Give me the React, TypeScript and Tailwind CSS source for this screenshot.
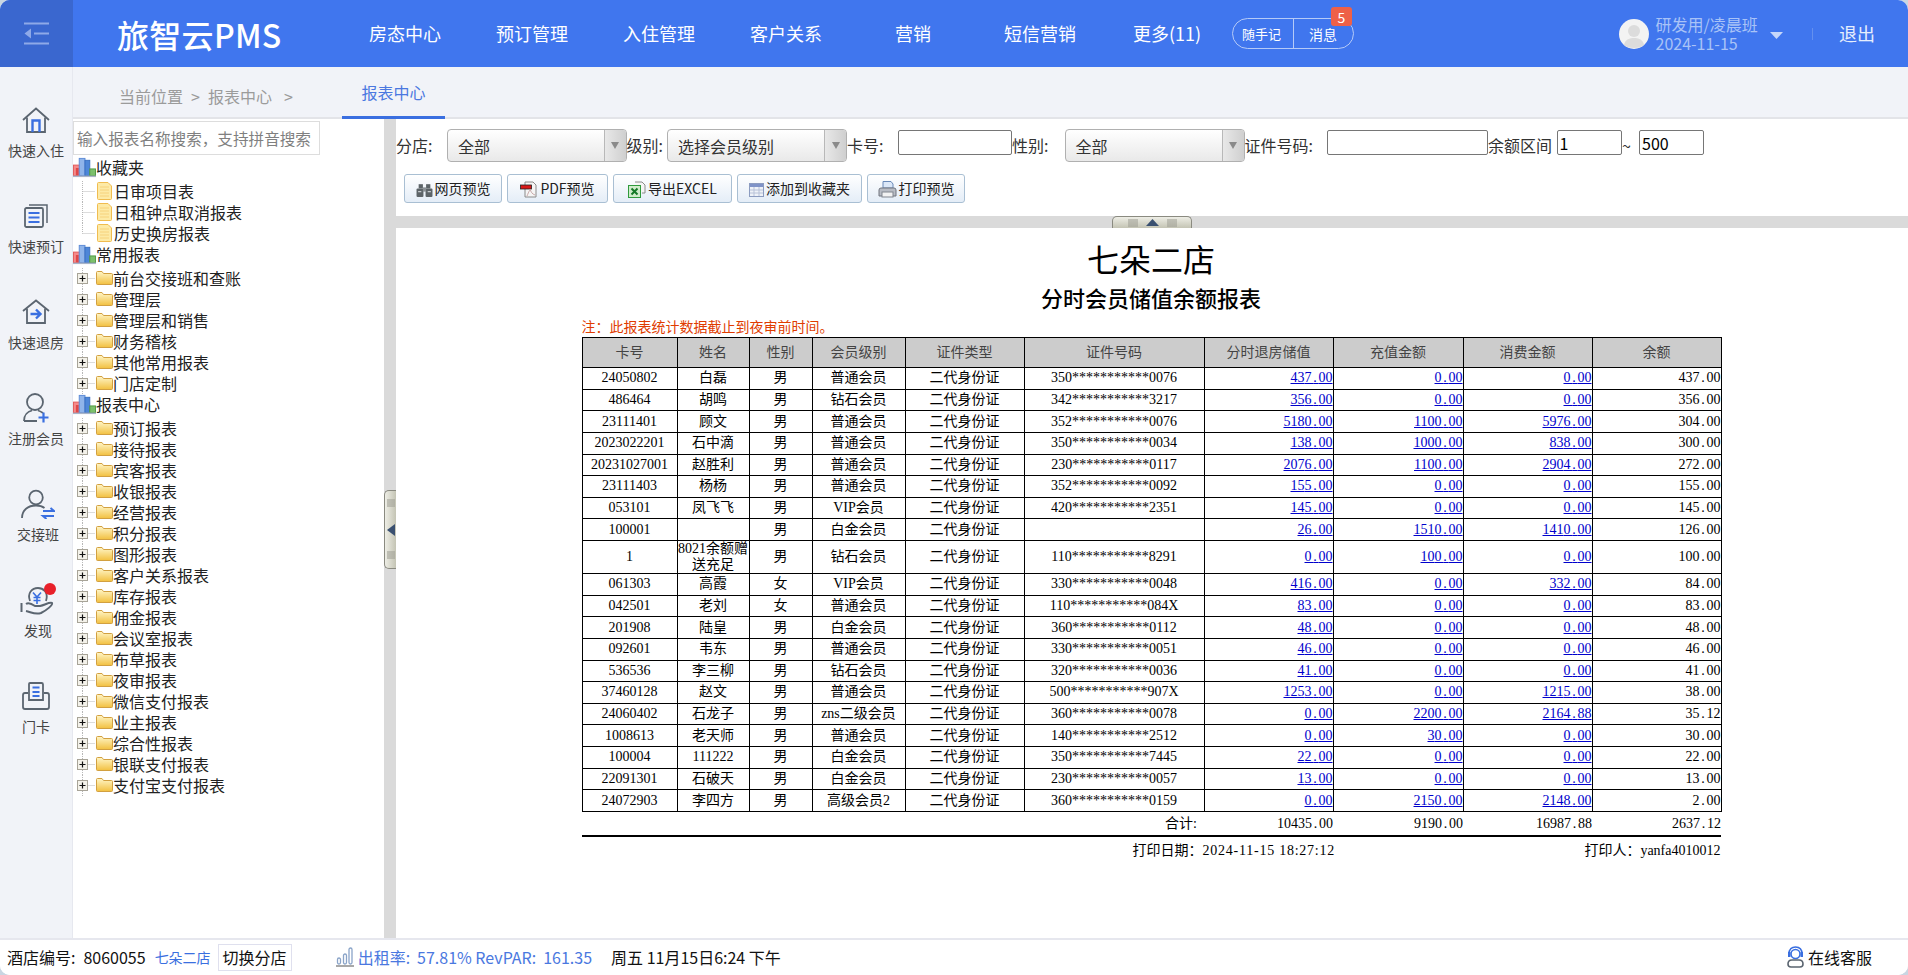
import React from 'react';

const navItems = ['房态中心', '预订管理', '入住管理', '客户关系', '营销', '短信营销', '更多(11)'];

const favourites = ['日审项目表', '日租钟点取消报表', '历史换房报表'];
const commonReports = ['前台交接班和查账', '管理层', '管理层和销售', '财务稽核', '其他常用报表', '门店定制'];
const centerReports = [
  '预订报表', '接待报表', '宾客报表', '收银报表', '经营报表', '积分报表', '图形报表', '客户关系报表', '库存报表',
  '佣金报表', '会议室报表', '布草报表', '夜审报表', '微信支付报表', '业主报表', '综合性报表', '银联支付报表', '支付宝支付报表',
];

const columns = [95, 72, 63, 93, 119, 180, 129, 130, 129, 129];
const headers = ['卡号', '姓名', '性别', '会员级别', '证件类型', '证件号码', '分时退房储值', '充值金额', '消费金额', '余额'];

// card, name, sex, level, id, refund, topup, spend, balance
const rows: string[][] = [
  ['24050802', '白磊', '男', '普通会员', '350***********0076', '437.00', '0.00', '0.00', '437.00'],
  ['486464', '胡鸣', '男', '钻石会员', '342***********3217', '356.00', '0.00', '0.00', '356.00'],
  ['23111401', '顾文', '男', '普通会员', '352***********0076', '5180.00', '1100.00', '5976.00', '304.00'],
  ['2023022201', '石中滴', '男', '普通会员', '350***********0034', '138.00', '1000.00', '838.00', '300.00'],
  ['20231027001', '赵胜利', '男', '普通会员', '230***********0117', '2076.00', '1100.00', '2904.00', '272.00'],
  ['23111403', '杨杨', '男', '普通会员', '352***********0092', '155.00', '0.00', '0.00', '155.00'],
  ['053101', '凤飞飞', '男', 'VIP会员', '420***********2351', '145.00', '0.00', '0.00', '145.00'],
  ['100001', '', '男', '白金会员', '', '26.00', '1510.00', '1410.00', '126.00'],
  ['1', '8021余额赠送充足', '男', '钻石会员', '110***********8291', '0.00', '100.00', '0.00', '100.00'],
  ['061303', '高霞', '女', 'VIP会员', '330***********0048', '416.00', '0.00', '332.00', '84.00'],
  ['042501', '老刘', '女', '普通会员', '110***********084X', '83.00', '0.00', '0.00', '83.00'],
  ['201908', '陆皇', '男', '白金会员', '360***********0112', '48.00', '0.00', '0.00', '48.00'],
  ['092601', '韦东', '男', '普通会员', '330***********0051', '46.00', '0.00', '0.00', '46.00'],
  ['536536', '李三柳', '男', '钻石会员', '320***********0036', '41.00', '0.00', '0.00', '41.00'],
  ['37460128', '赵文', '男', '普通会员', '500***********907X', '1253.00', '0.00', '1215.00', '38.00'],
  ['24060402', '石龙子', '男', 'zns二级会员', '360***********0078', '0.00', '2200.00', '2164.88', '35.12'],
  ['1008613', '老天师', '男', '普通会员', '140***********2512', '0.00', '30.00', '0.00', '30.00'],
  ['100004', '111222', '男', '白金会员', '350***********7445', '22.00', '0.00', '0.00', '22.00'],
  ['22091301', '石破天', '男', '白金会员', '230***********0057', '13.00', '0.00', '0.00', '13.00'],
  ['24072903', '李四方', '男', '高级会员2', '360***********0159', '0.00', '2150.00', '2148.00', '2.00'],
];

const GREY = '#5b6570';
const BLUE = '#3a6fe0';

const BarsIcon = () => (
  <svg width="23" height="21" viewBox="0 0 24 21" className="shrink-0">
    <rect x="0.5" y="8" width="8" height="11" fill="#f58a8a" stroke="#e25a5a" />
    <rect x="3" y="11" width="3" height="8" fill="#e04848" />
    <rect x="6.5" y="1" width="6" height="18" fill="#8fb4ea" stroke="#5d8bd6" />
    <rect x="12.5" y="3" width="5" height="16" fill="#4d86d8" stroke="#3a6fc0" />
    <rect x="17.5" y="12" width="6" height="7" fill="#7cc06c" stroke="#529a44" />
    <rect x="0" y="19" width="24" height="1.5" fill="#a9b4c8" />
  </svg>
);

const FolderIcon = () => (
  <svg width="17" height="14" viewBox="0 0 17 14" className="shrink-0">
    <defs>
      <linearGradient id="fold" x1="0" y1="0" x2="0" y2="1">
        <stop offset="0" stopColor="#fff6c8" />
        <stop offset="1" stopColor="#f2c040" />
      </linearGradient>
    </defs>
    <path d="M0.5 1.5 Q0.5 0.5 1.5 0.5 H6 L7.5 2.5 H15.5 Q16.5 2.5 16.5 3.5 V12.5 Q16.5 13.5 15.5 13.5 H1.5 Q0.5 13.5 0.5 12.5 Z" fill="url(#fold)" stroke="#d2a040" />
  </svg>
);

const NoteIcon = () => (
  <svg width="15" height="18" viewBox="0 0 15 18" className="shrink-0 ml-[1px]">
    <path d="M1.5 0.5 H11 L14.5 4 V16.5 Q14.5 17.5 13.5 17.5 H1.5 Q0.5 17.5 0.5 16.5 V1.5 Q0.5 0.5 1.5 0.5 Z" fill="#fdeaa6" stroke="#f0bc50" />
    <path d="M3 5 H12 M3 8 H12 M3 11 H12 M3 14 H12" stroke="#f6d27c" />
  </svg>
);

const Connector = ({ expander, last }: { expander?: boolean; last?: boolean }) => (
  <svg width="23" height="21" viewBox="0 0 23 21" className="shrink-0">
    <path d={last ? 'M9.5 0 V10.5' : 'M9.5 0 V21'} stroke="#b8b8b8" strokeDasharray="1 1" />
    <path d="M9.5 10.5 H22" stroke="#b8b8b8" strokeDasharray="1 1" />
    {expander && (
      <>
        <rect x="4.5" y="5.5" width="10" height="10" fill="#f4f2ea" stroke="#a8a498" />
        <path d="M6.5 10.5 H12.5 M9.5 7.5 V13.5" stroke="#111" strokeWidth="1.2" />
      </>
    )}
  </svg>
);

const TreeHead = ({ label }: { label: string }) => (
  <div className="flex h-[21px] items-center text-[16px] text-[#222]">
    <BarsIcon />
    <span className="whitespace-nowrap">{label}</span>
  </div>
);

const TreeFolder = ({ label }: { label: string }) => (
  <div className="flex h-[21px] items-center text-[16px] text-[#222]">
    <Connector expander />
    <FolderIcon />
    <span className="whitespace-nowrap">{label}</span>
  </div>
);

const SideItem = ({ label, icon, shift }: { label: string; icon: React.ReactNode; shift?: boolean }) => (
  <div className={`flex h-[96px] flex-col items-center justify-center gap-[3px] ${shift ? 'pl-[4px]' : ''}`}>
    <div className="flex h-[34px] items-center justify-center">{icon}</div>
    <span className="text-[14px] leading-[20px] text-[#444] whitespace-nowrap">{label}</span>
  </div>
);

const HomeIcon = () => (
  <svg width="28" height="26" viewBox="0 0 28 26" fill="none" stroke={GREY} strokeWidth="1.8">
    <path d="M1 13 L14 1.5 L27 13" />
    <path d="M5 10.5 V25 H23 V10.5" />
    <path d="M10.5 25 V13.5 H17.5 V25" stroke={BLUE} strokeWidth="2.4" />
  </svg>
);

const OrderIcon = () => (
  <svg width="24" height="24" viewBox="0 0 24 24" fill="none" stroke={GREY} strokeWidth="1.8">
    <rect x="1" y="4" width="18" height="19" rx="1.5" />
    <path d="M5 1 H23 V19" strokeWidth="1.5" />
    <path d="M4.5 9 H15.5 M4.5 13.5 H15.5 M4.5 18 H15.5" stroke={BLUE} strokeWidth="2.2" />
  </svg>
);

const CheckoutIcon = () => (
  <svg width="28" height="25" viewBox="0 0 28 25" fill="none" stroke={GREY} strokeWidth="1.8">
    <path d="M1 12 L14 1.5 L27 12" />
    <path d="M5 9.5 V24 H23 V9.5" />
    <path d="M8.5 15 H18 M14 10.5 L18.5 15 L14 19.5" stroke={BLUE} strokeWidth="2.4" />
  </svg>
);

const MemberIcon = () => (
  <svg width="26" height="30" viewBox="0 0 26 30" fill="none" stroke={GREY} strokeWidth="1.8">
    <circle cx="12" cy="9" r="8" />
    <path d="M1 28 C1 22 5 18.5 9 17.5 M15 17.5 C17 18 18.5 19 20 20 M1 28 H14" />
    <path d="M20.5 19.5 V29.5 M15.5 24.5 H25.5" stroke={BLUE} strokeWidth="2.2" />
  </svg>
);

const ShiftIcon = () => (
  <svg width="34" height="30" viewBox="0 0 34 30" fill="none" stroke={GREY} strokeWidth="1.8">
    <circle cx="15" cy="8.5" r="6.8" />
    <path d="M1 29 C1 21 7 16.5 15 16.5 C18 16.5 21 17 23.5 19" />
    <path d="M22 22 H33 L29.5 19 M33 27 H22 L25.5 30" stroke={BLUE} strokeWidth="2" />
  </svg>
);

const DiscoverIcon = () => (
  <svg width="36" height="33" viewBox="0 0 36 33" fill="none" stroke={GREY} strokeWidth="1.8">
    <path d="M10 18 C7 10 12 5 18 5 C21 5 23 6 25 8 C27 11 27 15 26 18" />
    <path d="M13 9.5 L17 14 L21 9.5 M17 14 V21 M13.5 14.5 H20.5 M13.5 17.5 H20.5" stroke={BLUE} strokeWidth="1.6" />
    <path d="M6 21 C9 19 12 21 15 23 H20 C25 22 29 19 32 20 C33 22 27 27 21 30 C15 32 11 29 6 28" strokeWidth="2" />
    <path d="M1.5 20 V29" strokeWidth="2" />
    <circle cx="30" cy="6" r="6" fill="#e8202a" stroke="none" />
  </svg>
);

const CardIcon = () => (
  <svg width="28" height="28" viewBox="0 0 28 28" fill="none" stroke={GREY} strokeWidth="1.8">
    <path d="M7 18 V2 Q7 1 8 1 H19.5 Q21 1 21 2.5 V18 Z" />
    <path d="M10.5 5.5 H17.5 M10.5 10 H17.5 M10.5 14 H17.5" stroke={BLUE} strokeWidth="1.8" />
    <path d="M6 11 H3 Q1 11 1 13 V25 Q1 27 3 27 H25 Q27 27 27 25 V13 Q27 11 25 11 H22" />
  </svg>
);

const Caret = () => (
  <div className="flex h-full w-[22px] items-center justify-center border-l border-[#b8b8b8] bg-gradient-to-r from-[#e8e8e8] to-[#cfcfcf]">
    <svg width="8" height="7" viewBox="0 0 8 7"><path d="M0 0 H8 L4 7 Z" fill="#8a8a8a" /></svg>
  </div>
);

const FakeSelect = ({ text, width }: { text: string; width: string }) => (
  <div className={`${width} flex h-[33px] shrink-0 items-center justify-between overflow-hidden rounded-[4px] border border-[#b0b0b0] bg-gradient-to-b from-white to-[#e9e9e9] pl-[10px] text-[16px] text-[#333]`}>
    <span>{text}</span>
    <Caret />
  </div>
);

const Label = ({ text, width }: { text: string; width: string }) => (
  <span className={`${width} shrink-0 whitespace-nowrap text-[16px] leading-[33px] text-[#333]`}>{text}</span>
);

const Field = ({ value, width }: { value?: string; width: string }) => (
  <input
    defaultValue={value}
    className={`${width} mt-px h-[25px] shrink-0 rounded-[2px] border border-[#767676] bg-white px-[2px] font-['Noto_Sans_CJK_SC',sans-serif] text-[16px] leading-[23px] text-black`}
  />
);

const ToolButton = ({ label, icon, width }: { label: string; icon: React.ReactNode; width: string }) => (
  <button className={`${width} flex h-[29px] shrink-0 items-center justify-center gap-[2px] rounded-[3px] border border-[#a9bfd3] bg-gradient-to-b from-white to-[#e4edf7] text-[14px] text-[#222] whitespace-nowrap`}>
    {icon}
    <span>{label}</span>
  </button>
);

const BinocularIcon = () => (
  <svg width="17" height="17" viewBox="0 0 16 16" fill="#5d6468" className="mt-[2px]">
    <rect x="0.5" y="7" width="6.5" height="8" rx="1" />
    <rect x="9" y="7" width="6.5" height="8" rx="1" />
    <rect x="2.5" y="3" width="4" height="4" />
    <rect x="9.5" y="3" width="4" height="4" />
    <rect x="6.5" y="6" width="3" height="4" fill="#8a9094" />
    <path d="M2 10 H5 M11 10 H14" stroke="#c6cbce" />
  </svg>
);

const PdfIcon = () => (
  <svg width="18" height="17" viewBox="0 0 18 17" className="mt-[2px]">
    <path d="M5 1 H13 L16 4 V16 H5 Z" fill="#f5f5f5" stroke="#8a8a8a" />
    <rect x="0.5" y="4" width="11" height="4" fill="#d81818" stroke="#222" strokeWidth="0.8" />
    <path d="M7 15 C9 10 10 9 10 8 C11 11 12 13 15 14" fill="none" stroke="#c8a8a8" />
  </svg>
);

const ExcelIcon = () => (
  <svg width="18" height="17" viewBox="0 0 18 17" className="mt-[2px]">
    <path d="M7 1 H14 L17 4 V12 H14" fill="#f5f5f5" stroke="#8a8a8a" />
    <rect x="0.5" y="4.5" width="12" height="12" fill="#cfeccb" stroke="#2f9a3c" />
    <path d="M3.5 7.5 L9.5 13.5 M9.5 7.5 L3.5 13.5" stroke="#157a28" strokeWidth="2" />
  </svg>
);

const TableIcon = () => (
  <svg width="15" height="14" viewBox="0 0 15 14" className="mt-[3px]">
    <rect x="0.5" y="0.5" width="14" height="13" fill="#eef2f8" stroke="#8c9cc0" />
    <rect x="1" y="1" width="13" height="3" fill="#7f93c8" />
    <path d="M1 7 H14 M1 10 H14 M5 4 V13 M10 4 V13" stroke="#b8c2d8" />
  </svg>
);

const PrinterIcon = () => (
  <svg width="19" height="18" viewBox="0 0 19 18" className="mt-[1px]">
    <path d="M5 8 V1.5 H13 L15 4 V8 Z" fill="#dce8f8" stroke="#6a8ab8" />
    <path d="M1 16 V10 Q1 8 3 8 H16 Q18 8 18 10 V16 Z" fill="#b8bcc4" stroke="#70757e" />
    <rect x="4" y="12" width="11" height="5" fill="#f2f2f2" stroke="#80858e" />
  </svg>
);

// SimSun gives the point a full half-em cell, the Times metric is 3.5px short
const Amount = ({ value }: { value: string }) => {
  const [whole, fraction] = value.split('.');
  return (
    <>
      {whole.slice(0, -1)}
      <span className="tracking-[1.75px]">{whole.slice(-1)}.</span>
      {fraction}
    </>
  );
};

const App = () => {
  return (
    <div className="h-[975px] w-full overflow-hidden bg-[#c9d6e2] font-['Noto_Sans_CJK_SC',sans-serif]">
      <div className="flex h-full flex-col overflow-hidden rounded-[10px] bg-white">
        {/* Header */}
        <header className="flex h-[67px] shrink-0 items-center bg-[#4076ee] text-white">
          <div className="flex h-full w-[73px] shrink-0 items-center justify-center bg-[#3a67cf]">
            <svg width="25" height="23" viewBox="0 0 25 23" fill="none" stroke="#8ea9e8" strokeWidth="2.2">
              <path d="M0 1.5 H25 M10 11.5 H25 M0 21.5 H25" />
              <path d="M7 6.5 V16.5 L0.5 11.5 Z" fill="#8ea9e8" stroke="none" />
            </svg>
          </div>
          <div className="w-[268.5px] shrink-0 pl-[44px] text-[32px] font-medium leading-none tracking-[0.3px] whitespace-nowrap">旅智云PMS</div>
          <nav className="flex pb-px">
            {navItems.map((item) => (
              <span key={item} className="w-[127px] text-center text-[18px] whitespace-nowrap">{item}</span>
            ))}
          </nav>
          <div className="relative ml-[1.5px] flex h-[31px] w-[122px] shrink-0 items-center rounded-full border border-[#b5caf7] text-[14px] leading-none">
            <span className="w-[60px] pl-[9px] text-[13px] whitespace-nowrap">随手记</span>
            <span className="flex h-full flex-1 items-center border-l border-[#b5caf7] pl-[15px]">消息</span>
            <span className="absolute -top-[12px] right-[1px] flex h-[19px] w-[21px] items-center justify-center rounded-[3px] bg-[#ee6048] text-[14px]">5</span>
          </div>
          <div className="ml-auto flex items-center pr-[33px]">
            <svg width="30" height="30" viewBox="0 0 30 30">
              <circle cx="15" cy="15" r="15" fill="#f3f3f3" />
              <circle cx="15" cy="12" r="6" fill="#dcdcdc" />
              <path d="M5 26 C6 20 11 19 15 19 C19 19 24 20 25 26 C21 30 9 30 5 26 Z" fill="#dcdcdc" />
            </svg>
            <div className="ml-[6.5px] w-[114px] text-[16px] leading-[19px] text-[#a9c3f7]">
              <div>研发用/凌晨班</div>
              <div>2024-11-15</div>
            </div>
            <svg width="13" height="7" viewBox="0 0 13 7" className="mt-[4px]"><path d="M0 0 H13 L6.5 7 Z" fill="#c6d7fa" /></svg>
            <div className="ml-[29.5px] h-[12px] w-px bg-[#6490ee]" />
            <span className="ml-[26px] text-[18px] text-[#e6eefd]">退出</span>
          </div>
        </header>

        <div className="flex min-h-0 flex-1">
          {/* Left quick menu */}
          <aside className="w-[73px] shrink-0 border-r border-[#e6e8ef] bg-[#f1f3f8] pt-[16px]">
            <SideItem label="快速入住" icon={<HomeIcon />} />
            <SideItem label="快速预订" icon={<OrderIcon />} />
            <SideItem label="快速退房" icon={<CheckoutIcon />} />
            <SideItem label="注册会员" icon={<MemberIcon />} />
            <SideItem label="交接班" icon={<ShiftIcon />} shift />
            <SideItem label="发现" icon={<DiscoverIcon />} shift />
            <SideItem label="门卡" icon={<CardIcon />} />
          </aside>

          <div className="flex min-w-0 flex-1 flex-col">
            {/* Breadcrumb */}
            <div className="flex h-[52px] shrink-0 border-b-2 border-[#e3e4e8] bg-[#f1f3f8]">
              <div className="flex w-[269px] shrink-0 items-center pl-[46px] pt-[7px] text-[16px] text-[#9b9b9b]">
                <span>当前位置</span>
                <span className="ml-[8px]">&gt;</span>
                <span className="ml-[8px]">报表中心</span>
                <span className="ml-[12px]">&gt;</span>
              </div>
              <div className="-mb-[2px] flex w-[103px] shrink-0 items-center justify-center border-b-[3px] border-[#3a6fe0] pt-px text-[16px] text-[#4a78e0]">报表中心</div>
            </div>

            <div className="flex min-h-0 flex-1">
              {/* Report tree */}
              <div className="w-[311px] shrink-0 overflow-hidden pt-[2px]">
                <input
                  placeholder="输入报表名称搜索，支持拼音搜索"
                  className="h-[34px] w-[247px] border border-[#dddddd] pl-[3px] text-[15.6px] text-[#333] placeholder:text-[#808080]"
                />
                <div className="mt-[1.5px]">
                  <TreeHead label="收藏夹" />
                  <div className="pt-[3px]">
                    {favourites.map((name, i) => (
                      <div key={name} className="flex h-[21px] items-center text-[16px] text-[#222]">
                        <Connector last={i === favourites.length - 1} />
                        <NoteIcon />
                        <span className="ml-[2px] whitespace-nowrap">{name}</span>
                      </div>
                    ))}
                  </div>
                  <TreeHead label="常用报表" />
                  <div className="pt-[3px]">
                    {commonReports.map((name) => <TreeFolder key={name} label={name} />)}
                  </div>
                  <TreeHead label="报表中心" />
                  <div className="pt-[3px]">
                    {centerReports.map((name) => <TreeFolder key={name} label={name} />)}
                  </div>
                </div>
              </div>

              {/* Vertical splitter */}
              <div className="relative w-[12px] shrink-0 bg-[#dadada]">
                <div className="absolute left-0 top-[371px] flex h-[79px] w-[12px] flex-col items-center justify-between rounded-l-[5px] border border-r-0 border-[#8a8a80] bg-gradient-to-r from-[#eeeee6] to-[#c4c4b4] py-[8px]">
                  <svg width="8" height="9" viewBox="0 0 8 9"><path d="M0 1 H8 M0 3 H8 M0 5 H8 M0 7 H8" stroke="#9a9a90" /></svg>
                  <svg width="8" height="12" viewBox="0 0 8 12"><path d="M8 0 V12 L0 6 Z" fill="#3a5070" /></svg>
                  <svg width="8" height="9" viewBox="0 0 8 9"><path d="M0 1 H8 M0 3 H8 M0 5 H8 M0 7 H8" stroke="#9a9a90" /></svg>
                </div>
              </div>

              <div className="flex min-w-0 flex-1 flex-col">
                {/* Filter */}
                <div className="h-[97px] shrink-0 pt-[10px]">
                  <div className="flex items-start whitespace-nowrap">
                    <Label text="分店:" width="w-[51px]" />
                    <FakeSelect text="全部" width="w-[179.5px]" />
                    <Label text="级别:" width="w-[40.5px]" />
                    <FakeSelect text="选择会员级别" width="w-[180px]" />
                    <Label text="卡号:" width="w-[51px]" />
                    <Field width="w-[114px]" />
                    <Label text="性别:" width="w-[52.5px]" />
                    <FakeSelect text="全部" width="w-[180px]" />
                    <Label text="证件号码:" width="w-[82.5px]" />
                    <Field width="w-[161px]" />
                    <Label text="余额区间" width="w-[68.5px]" />
                    <Field value="1" width="w-[65.6px]" />
                    <Label text="~" width="w-[17px]" />
                    <Field value="500" width="w-[65.3px]" />
                  </div>
                  <div className="mt-[12px] flex gap-[5px] pl-[8px]">
                    <ToolButton label="网页预览" icon={<BinocularIcon />} width="w-[98px]" />
                    <ToolButton label="PDF预览" icon={<PdfIcon />} width="w-[101px]" />
                    <ToolButton label="导出EXCEL" icon={<ExcelIcon />} width="w-[119px]" />
                    <ToolButton label="添加到收藏夹" icon={<TableIcon />} width="w-[125px]" />
                    <ToolButton label="打印预览" icon={<PrinterIcon />} width="w-[98px]" />
                  </div>
                </div>

                {/* Horizontal splitter */}
                <div className="relative flex h-[12px] shrink-0 justify-center bg-[#dadada]">
                  <div className="flex h-[12px] w-[80px] items-center justify-center gap-[8px] rounded-t-[5px] border border-b-0 border-[#8a8a80] bg-gradient-to-b from-[#eeeee6] to-[#c4c4b4]">
                    <svg width="10" height="8" viewBox="0 0 10 8"><path d="M1 0 V8 M3 0 V8 M5 0 V8 M7 0 V8 M9 0 V8" stroke="#9a9a90" /></svg>
                    <svg width="13" height="7" viewBox="0 0 13 7"><path d="M6.5 0 L13 7 H0 Z" fill="#3a5070" /></svg>
                    <svg width="10" height="8" viewBox="0 0 10 8"><path d="M1 0 V8 M3 0 V8 M5 0 V8 M7 0 V8 M9 0 V8" stroke="#9a9a90" /></svg>
                  </div>
                </div>

                {/* Report */}
                <div className="min-h-0 flex-1 overflow-hidden bg-white pl-[185.5px] pt-[13px] font-['Liberation_Serif','Noto_Sans_CJK_SC',serif] text-[14px] text-black">
                  <div className="w-[1139px]">
                    <div className="text-center text-[32px] leading-[40px]">七朵二店</div>
                    <div className="mt-[4px] text-center text-[22px] font-medium leading-[30px]">分时会员储值余额报表</div>
                    <div className="mt-[3px] h-[19px] text-[14px] leading-[19px] text-[#e03c00]">注：此报表统计数据截止到夜审前时间。</div>
                    <table className="w-[1139px] table-fixed border-collapse">
                      <colgroup>
                        {columns.map((width, i) => <col key={i} style={{ width }} />)}
                      </colgroup>
                      <thead>
                        <tr className="h-[30px] bg-[#cccccc] text-[#444]">
                          {headers.map((h) => <th key={h} className="border border-black p-0 text-center font-normal">{h}</th>)}
                        </tr>
                      </thead>
                      <tbody>
                        {rows.map((row) => (
                          <tr key={row[0]} className={row[1].length > 6 ? 'h-[33px]' : 'h-[21.63px]'}>
                            {row.slice(0, 4).map((cell, i) => (
                              <td key={i} className="border border-black p-0 text-center leading-[16px]">{cell}</td>
                            ))}
                            <td className="border border-black p-0 text-center leading-[16px]">二代身份证</td>
                            <td className="border border-black p-0 text-center leading-[16px]">{row[4]}</td>
                            {row.slice(5, 8).map((cell, i) => (
                              <td key={i} className="border border-black p-0 text-right leading-[16px]">
                                <a className="text-[#0000cc] underline"><Amount value={cell} /></a>
                              </td>
                            ))}
                            <td className="border border-black p-0 text-right leading-[16px]"><Amount value={row[8]} /></td>
                          </tr>
                        ))}
                        <tr className="h-[25px]">
                          <td colSpan={6} className="border-b-2 border-black p-0 pr-[7px] text-right">合计:</td>
                          <td className="border-b-2 border-black p-0 text-right"><Amount value="10435.00" /></td>
                          <td className="border-b-2 border-black p-0 text-right"><Amount value="9190.00" /></td>
                          <td className="border-b-2 border-black p-0 text-right"><Amount value="16987.88" /></td>
                          <td className="border-b-2 border-black p-0 text-right"><Amount value="2637.12" /></td>
                        </tr>
                      </tbody>
                    </table>
                    <div className="flex h-[26px] items-center justify-between pl-[551px]">
                      <span>打印日期：<span className="tracking-[0.76px]">2024-11-15 18:27:12</span></span>
                      <span>打印人：yanfa4010012</span>
                    </div>
                  </div>
                </div>
              </div>
            </div>
          </div>
        </div>

        {/* Status bar */}
        <footer className="flex h-[37px] shrink-0 items-center border-t-2 border-[#e6e7ee] bg-white pl-[7px] pr-[36px] pb-px text-[16px] text-[#111] whitespace-nowrap">
          <span>酒店编号:</span>
          <span className="ml-[8px]">8060055</span>
          <span className="ml-[9px] text-[14px] text-[#3a6fe0]">七朵二店</span>
          <span className="ml-[7px] flex h-[27px] w-[74px] items-center justify-center border border-[#dfe0ee]">切换分店</span>
          <svg width="18" height="20" viewBox="0 0 18 20" fill="none" stroke="#8aa4c8" strokeWidth="1.3" className="ml-[44px]">
            <rect x="1.5" y="11" width="3" height="6" rx="1.5" />
            <rect x="7.5" y="7" width="3" height="10" rx="1.5" />
            <rect x="13" y="1" width="3" height="16" rx="1.5" />
            <path d="M0 19 H18" stroke="#a8a8a8" strokeWidth="2" />
          </svg>
          <span className="ml-[4px] text-[#4a78e0]">出租率:</span>
          <span className="ml-[7px] text-[#4a78e0]">57.81% RevPAR:</span>
          <span className="ml-[7px] text-[#4a78e0]">161.35</span>
          <span className="ml-[19px]">周五 11月15日6:24 下午</span>
          <div className="ml-auto flex items-center gap-[4px]">
            <svg width="17" height="22" viewBox="0 0 17 22" fill="none" strokeWidth="1.6">
              <path d="M2 8 C2 3 5 1 8.5 1 C12 1 15 3 15 8" stroke={BLUE} />
              <circle cx="8.5" cy="8" r="4.5" stroke={BLUE} />
              <rect x="1" y="6" width="2.5" height="5" fill={BLUE} stroke="none" />
              <rect x="13.5" y="6" width="2.5" height="5" fill={BLUE} stroke="none" />
              <path d="M4 21 Q1 21 1 18 Q1 14 5 14 H12 Q16 14 16 18 Q16 21 13 21 Z" stroke={GREY} />
            </svg>
            <span>在线客服</span>
          </div>
        </footer>
      </div>
    </div>
  );
};

export default App;
